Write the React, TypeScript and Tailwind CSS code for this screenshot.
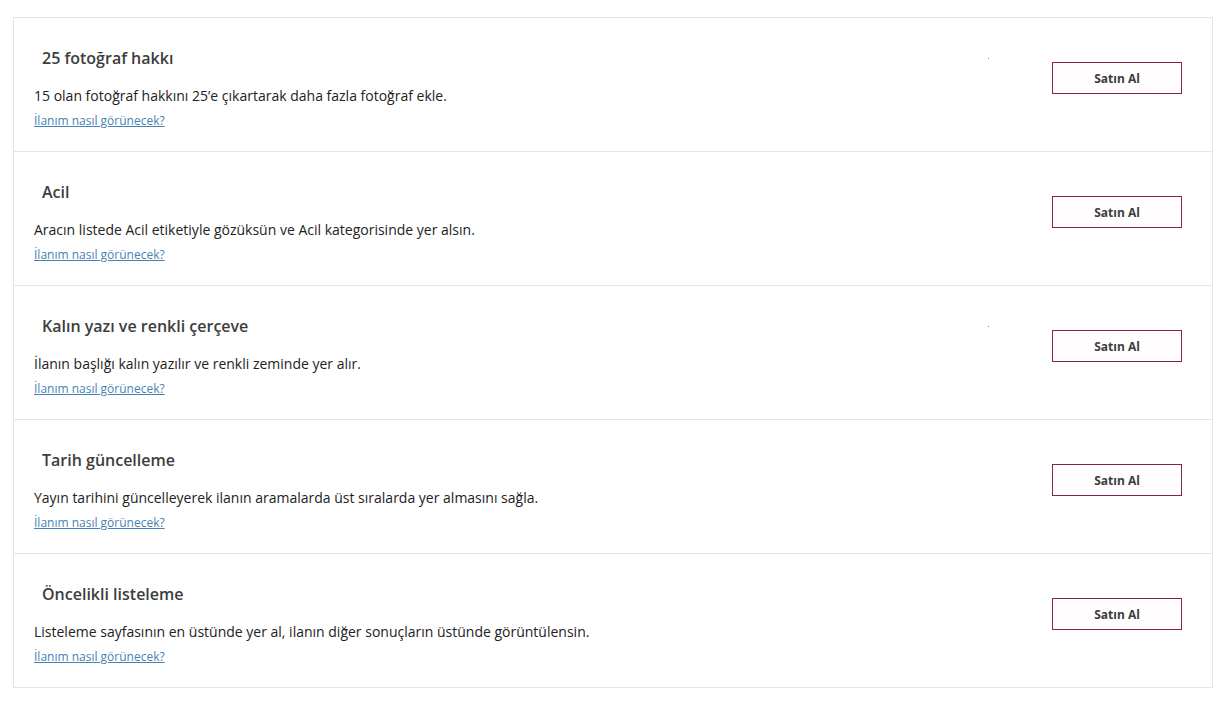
import React from "react";

const items = [
  { title: "25 fotoğraf hakkı", desc: "15 olan fotoğraf hakkını 25’e çıkartarak daha fazla fotoğraf ekle.", dot: true },
  { title: "Acil", desc: "Aracın listede Acil etiketiyle gözüksün ve Acil kategorisinde yer alsın.", dot: false },
  { title: "Kalın yazı ve renkli çerçeve", desc: "İlanın başlığı kalın yazılır ve renkli zeminde yer alır.", dot: true },
  { title: "Tarih güncelleme", desc: "Yayın tarihini güncelleyerek ilanın aramalarda üst sıralarda yer almasını sağla.", dot: false },
  { title: "Öncelikli listeleme", desc: "Listeleme sayfasının en üstünde yer al, ilanın diğer sonuçların üstünde görüntülensin.", dot: false },
];

export default function App() {
  return (
    <div
      className="min-h-[701px] bg-white pl-[13px] pt-[17px]"
      style={{ fontFamily: '"Open Sans", "Noto Sans", sans-serif' }}
    >
      <div className="w-[1200px] border border-[#e5e5e5] divide-y divide-[#e5e5e5]">
        {items.map((it) => (
          <div key={it.title} className="relative flex h-[133px] box-content">
            <div className="flex-1 pl-[20px] pt-[29px]">
              <div className="pl-[8px] text-[16px] leading-[22px] font-semibold text-[#3d3d3d]">{it.title}</div>
              <div className="mt-[17px] text-[14px] leading-[20px] text-[#222]">{it.desc}</div>
              <a
                href="#"
                className="mt-[7px] block w-fit text-[12px] leading-[16px] text-[#4583b6] underline"
              >
                İlanım nasıl görünecek?
              </a>
            </div>
            {it.dot && <span className="absolute left-[974px] top-[40px] h-px w-px bg-[#6b8ba8]" />}
            <div className="pr-[30px] pt-[44px]">
              <button className="flex h-[32px] w-[130px] items-center justify-center border border-[#8a1f52] bg-[#fffdfe] pt-px text-[12px] font-bold text-[#3d3d3d]">
                Satın Al
              </button>
            </div>
          </div>
        ))}
      </div>
    </div>
  );
}
